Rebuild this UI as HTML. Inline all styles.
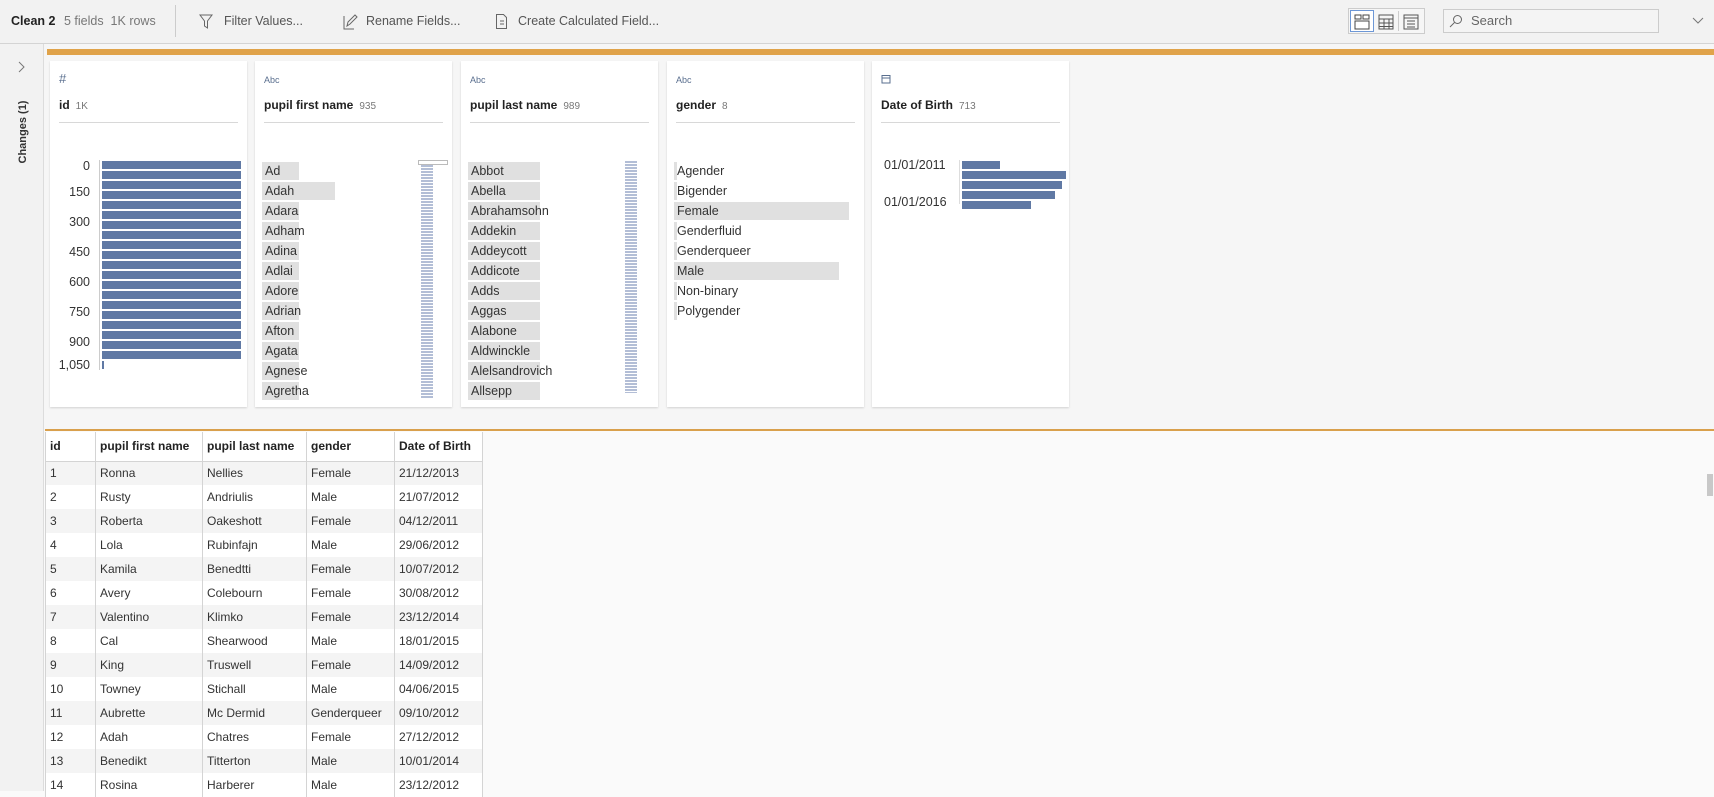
<!DOCTYPE html>
<html><head><meta charset="utf-8"><style>
*{box-sizing:border-box;margin:0;padding:0}
body{width:1714px;height:791px;overflow:hidden;background:#fafafa;font-family:"Liberation Sans",sans-serif;color:#333;position:relative}
.abs{position:absolute}
#tb{left:0;top:0;width:1714px;height:44px;background:#f2f2f2;border-bottom:1px solid #d4d4d4}
#tb .t{position:absolute;top:14px;font-size:12.5px;color:#555}
#side{left:0;top:44px;width:44px;height:747px;background:#f2f2f2;border-right:1px solid #dcdcdc}
#cards{left:44px;top:44px;width:1670px;height:386px;background:#f6f6f6}
.card{position:absolute;top:61px;width:197px;height:346px;background:#fff;box-shadow:0 1px 2px rgba(0,0,0,.15)}
.card .ic{position:absolute;left:9px;top:14px;font-size:9px;color:#5a6f8f}
.card .ti{position:absolute;left:9px;top:37px;font-size:12px;font-weight:bold;color:#222}
.card .ti span{font-weight:normal;color:#777;font-size:10px;margin-left:6px}
.card .sep{position:absolute;left:9px;right:9px;top:61px;border-top:1px solid #d8d8d8}
.it{position:absolute;height:18px;font-size:12.5px;line-height:18px;color:#333;padding-left:3px;white-space:nowrap}
.it i{position:absolute;left:0;top:0;height:18px;background:#e0e0e0;z-index:0}
.it b{position:relative;font-weight:normal;z-index:1}
.mh{position:absolute;width:12px;background:repeating-linear-gradient(#b3bed6 0 2px,transparent 2px 3px)}
table{position:absolute;left:45px;top:432px;border-collapse:collapse;font-size:12px;background:#fff}
td,th{height:24px;border-left:1px solid #d4d4d4;border-right:1px solid #d4d4d4;padding-left:4px;text-align:left;white-space:nowrap}
th{height:29px;font-weight:bold;border-bottom:1px solid #d4d4d4;color:#222}
tr:nth-child(even) td{background:#f4f4f4}
</style></head><body>
<div id="tb" class="abs">
 <div class="t" style="left:11px;font-weight:bold;color:#222">Clean 2</div>
 <div class="t" style="left:64px;color:#777">5 fields&nbsp;&nbsp;1K rows</div>
 <div class="abs" style="left:175px;top:5px;height:32px;border-left:1px solid #ccc"></div>
 <svg class="abs" style="left:199px;top:14px" width="14" height="16" viewBox="0 0 14 16"><path d="M1 1h12L8.5 7v7l-3-2V7z" fill="none" stroke="#666"/></svg>
 <div class="t" style="left:224px">Filter Values...</div>
 <svg class="abs" style="left:342px;top:13px" width="16" height="17" viewBox="0 0 16 17"><path d="M2 3v13h10M5 13l1-4 7-7 2 2-7 7z" fill="none" stroke="#666"/></svg>
 <div class="t" style="left:366px">Rename Fields...</div>
 <svg class="abs" style="left:495px;top:13px" width="14" height="17" viewBox="0 0 14 17"><path d="M1.5 1.5h7l3 3v11h-10zM5 8h4M5 11h4" fill="none" stroke="#666"/></svg>
 <div class="t" style="left:518px">Create Calculated Field...</div>
 <div class="abs" style="left:1348px;top:8px;width:77px;height:26px;border:1px solid #ccc;background:#f6f6f6"></div>
 <div class="abs" style="left:1350px;top:10px;width:24px;height:22px;border:1px solid #6d97d6;background:#fff"></div>
 <svg class="abs" style="left:1354px;top:14px" width="16" height="16" viewBox="0 0 16 16" fill="none" stroke="#444"><rect x="1" y="1" width="6" height="4"/><rect x="9" y="1" width="6" height="4"/><rect x="1" y="7" width="14" height="8"/></svg>
 <svg class="abs" style="left:1378px;top:14px" width="16" height="16" viewBox="0 0 16 16" fill="none" stroke="#555"><rect x="1" y="1" width="14" height="14"/><path d="M1 5h14M1 9h14M1 12.5h14M6 5v10M11 5v10"/></svg>
 <div class="abs" style="left:1398px;top:11px;height:20px;border-left:1px solid #ccc"></div>
 <svg class="abs" style="left:1403px;top:14px" width="16" height="16" viewBox="0 0 16 16" fill="none" stroke="#555"><rect x="1" y="1" width="14" height="14"/><path d="M1 4h14M4 7h8M4 10h8M4 13h8"/></svg>
 <div class="abs" style="left:1443px;top:9px;width:216px;height:24px;border:1px solid #ccc;background:#f4f4f4"></div>
 <svg class="abs" style="left:1449px;top:14px" width="14" height="14" viewBox="0 0 14 14" fill="none" stroke="#666"><circle cx="8.5" cy="5.5" r="4"/><path d="M5.5 8.5 1 13"/></svg>
 <div class="t" style="left:1471px;top:13px;font-size:13px;color:#666">Search</div>
 <svg class="abs" style="left:1692px;top:17px" width="12" height="8" viewBox="0 0 12 8"><path d="M1 1l5 5 5-5" fill="none" stroke="#777"/></svg>
</div>
<div id="side" class="abs">
 <svg class="abs" style="left:18px;top:17px" width="8" height="12" viewBox="0 0 8 12"><path d="M1 1l5 5-5 5" fill="none" stroke="#777"/></svg>
 <div class="abs" style="left:-12px;top:82px;width:70px;transform:rotate(-90deg);font-size:11px;font-weight:bold;color:#333;white-space:nowrap;text-align:center">Changes (1)</div>
</div>
<div id="cards" class="abs"></div>
<div class="abs" style="left:47px;top:49px;width:1667px;height:6px;background:#e0a34a"></div>
<div class="abs" style="left:45px;top:429px;width:1669px;height:2px;background:#d9a04c"></div>

<div class="card" style="left:50px">
 <div class="ic" style="font-size:13px;top:10px">#</div>
 <div class="ti">id<span>1K</span></div><div class="sep"></div>
 <div class="abs" style="left:49px;top:99px;height:210px;border-left:1px solid #ccc"></div>
 <div class="abs" style="left:52px;top:100px;width:139px;height:200px;background:repeating-linear-gradient(#6079a4 0 8px,#fff 8px 10px)"></div>
 <div class="abs" style="left:52px;top:300px;width:2px;height:8px;background:#6079a4"></div>
 <div class="abs" style="left:0;top:0;font-size:12.5px;color:#333">
  <div class="abs" style="left:0;top:98px;width:40px;text-align:right">0</div>
  <div class="abs" style="left:0;top:124px;width:40px;text-align:right">150</div>
  <div class="abs" style="left:0;top:154px;width:40px;text-align:right">300</div>
  <div class="abs" style="left:0;top:184px;width:40px;text-align:right">450</div>
  <div class="abs" style="left:0;top:214px;width:40px;text-align:right">600</div>
  <div class="abs" style="left:0;top:244px;width:40px;text-align:right">750</div>
  <div class="abs" style="left:0;top:274px;width:40px;text-align:right">900</div>
  <div class="abs" style="left:0;top:297px;width:40px;text-align:right">1,050</div>
 </div>
</div>
<div class="card" style="left:255px">
 <div class="ic">Abc</div><div class="ti">pupil first name<span>935</span></div><div class="sep"></div>
 <div class="it" style="left:7px;top:101px"><i style="width:37px"></i><b>Ad</b></div>
 <div class="it" style="left:7px;top:121px"><i style="width:73px"></i><b>Adah</b></div>
 <div class="it" style="left:7px;top:141px"><i style="width:37px"></i><b>Adara</b></div>
 <div class="it" style="left:7px;top:161px"><i style="width:37px"></i><b>Adham</b></div>
 <div class="it" style="left:7px;top:181px"><i style="width:37px"></i><b>Adina</b></div>
 <div class="it" style="left:7px;top:201px"><i style="width:37px"></i><b>Adlai</b></div>
 <div class="it" style="left:7px;top:221px"><i style="width:37px"></i><b>Adore</b></div>
 <div class="it" style="left:7px;top:241px"><i style="width:37px"></i><b>Adrian</b></div>
 <div class="it" style="left:7px;top:261px"><i style="width:37px"></i><b>Afton</b></div>
 <div class="it" style="left:7px;top:281px"><i style="width:37px"></i><b>Agata</b></div>
 <div class="it" style="left:7px;top:301px"><i style="width:37px"></i><b>Agnese</b></div>
 <div class="it" style="left:7px;top:321px"><i style="width:37px"></i><b>Agretha</b></div>
 <div class="abs" style="left:163px;top:99px;width:30px;height:5px;border:1px solid #bbb"></div>
 <div class="mh" style="left:166px;top:104px;height:234px"></div>
</div>
<div class="card" style="left:461px">
 <div class="ic">Abc</div><div class="ti">pupil last name<span>989</span></div><div class="sep"></div>
 <div class="it" style="left:7px;top:101px"><i style="width:72px"></i><b>Abbot</b></div>
 <div class="it" style="left:7px;top:121px"><i style="width:72px"></i><b>Abella</b></div>
 <div class="it" style="left:7px;top:141px"><i style="width:72px"></i><b>Abrahamsohn</b></div>
 <div class="it" style="left:7px;top:161px"><i style="width:72px"></i><b>Addekin</b></div>
 <div class="it" style="left:7px;top:181px"><i style="width:72px"></i><b>Addeycott</b></div>
 <div class="it" style="left:7px;top:201px"><i style="width:72px"></i><b>Addicote</b></div>
 <div class="it" style="left:7px;top:221px"><i style="width:72px"></i><b>Adds</b></div>
 <div class="it" style="left:7px;top:241px"><i style="width:72px"></i><b>Aggas</b></div>
 <div class="it" style="left:7px;top:261px"><i style="width:72px"></i><b>Alabone</b></div>
 <div class="it" style="left:7px;top:281px"><i style="width:72px"></i><b>Aldwinckle</b></div>
 <div class="it" style="left:7px;top:301px"><i style="width:72px"></i><b>Alelsandrovich</b></div>
 <div class="it" style="left:7px;top:321px"><i style="width:72px"></i><b>Allsepp</b></div>
 <div class="mh" style="left:164px;top:100px;height:232px"></div>
</div>
<div class="card" style="left:667px">
 <div class="ic">Abc</div><div class="ti">gender<span>8</span></div><div class="sep"></div>
 <div class="it" style="left:7px;top:101px"><i style="width:3px"></i><b>Agender</b></div>
 <div class="it" style="left:7px;top:121px"><i style="width:3px"></i><b>Bigender</b></div>
 <div class="it" style="left:7px;top:141px"><i style="width:175px"></i><b>Female</b></div>
 <div class="it" style="left:7px;top:161px"><i style="width:3px"></i><b>Genderfluid</b></div>
 <div class="it" style="left:7px;top:181px"><i style="width:3px"></i><b>Genderqueer</b></div>
 <div class="it" style="left:7px;top:201px"><i style="width:165px"></i><b>Male</b></div>
 <div class="it" style="left:7px;top:221px"><i style="width:3px"></i><b>Non-binary</b></div>
 <div class="it" style="left:7px;top:241px"><i style="width:3px"></i><b>Polygender</b></div>
</div>
<div class="card" style="left:872px">
 <svg class="abs" style="left:9px;top:13px" width="10" height="10" viewBox="0 0 10 10" fill="none" stroke="#5a6f8f"><rect x="1" y="1.5" width="8" height="7.5"/><path d="M1 4h8"/></svg>
 <div class="ti">Date of Birth<span>713</span></div><div class="sep"></div>
 <div class="abs" style="left:12px;top:97px;font-size:12.5px">01/01/2011</div>
 <div class="abs" style="left:12px;top:134px;font-size:12.5px">01/01/2016</div>
 <div class="abs" style="left:87px;top:99px;height:44px;border-left:1px solid #ddd"></div>
 <div class="abs" style="left:90px;top:100px;width:38px;height:8px;background:#6079a4"></div>
 <div class="abs" style="left:90px;top:110px;width:104px;height:8px;background:#6079a4"></div>
 <div class="abs" style="left:90px;top:120px;width:100px;height:8px;background:#6079a4"></div>
 <div class="abs" style="left:90px;top:130px;width:93px;height:8px;background:#6079a4"></div>
 <div class="abs" style="left:90px;top:140px;width:69px;height:8px;background:#6079a4"></div>
</div>

<table>
<tr><th style="width:50px">id</th><th style="width:107px">pupil first name</th><th style="width:104px">pupil last name</th><th style="width:88px">gender</th><th style="width:88px">Date of Birth</th></tr>
<tr><td>1</td><td>Ronna</td><td>Nellies</td><td>Female</td><td>21/12/2013</td></tr>
<tr><td>2</td><td>Rusty</td><td>Andriulis</td><td>Male</td><td>21/07/2012</td></tr>
<tr><td>3</td><td>Roberta</td><td>Oakeshott</td><td>Female</td><td>04/12/2011</td></tr>
<tr><td>4</td><td>Lola</td><td>Rubinfajn</td><td>Male</td><td>29/06/2012</td></tr>
<tr><td>5</td><td>Kamila</td><td>Benedtti</td><td>Female</td><td>10/07/2012</td></tr>
<tr><td>6</td><td>Avery</td><td>Colebourn</td><td>Female</td><td>30/08/2012</td></tr>
<tr><td>7</td><td>Valentino</td><td>Klimko</td><td>Female</td><td>23/12/2014</td></tr>
<tr><td>8</td><td>Cal</td><td>Shearwood</td><td>Male</td><td>18/01/2015</td></tr>
<tr><td>9</td><td>King</td><td>Truswell</td><td>Female</td><td>14/09/2012</td></tr>
<tr><td>10</td><td>Towney</td><td>Stichall</td><td>Male</td><td>04/06/2015</td></tr>
<tr><td>11</td><td>Aubrette</td><td>Mc Dermid</td><td>Genderqueer</td><td>09/10/2012</td></tr>
<tr><td>12</td><td>Adah</td><td>Chatres</td><td>Female</td><td>27/12/2012</td></tr>
<tr><td>13</td><td>Benedikt</td><td>Titterton</td><td>Male</td><td>10/01/2014</td></tr>
<tr><td>14</td><td>Rosina</td><td>Harberer</td><td>Male</td><td>23/12/2012</td></tr>
</table>
<div class="abs" style="left:1707px;top:474px;width:6px;height:22px;background:#c8c8c8"></div>
</body></html>
